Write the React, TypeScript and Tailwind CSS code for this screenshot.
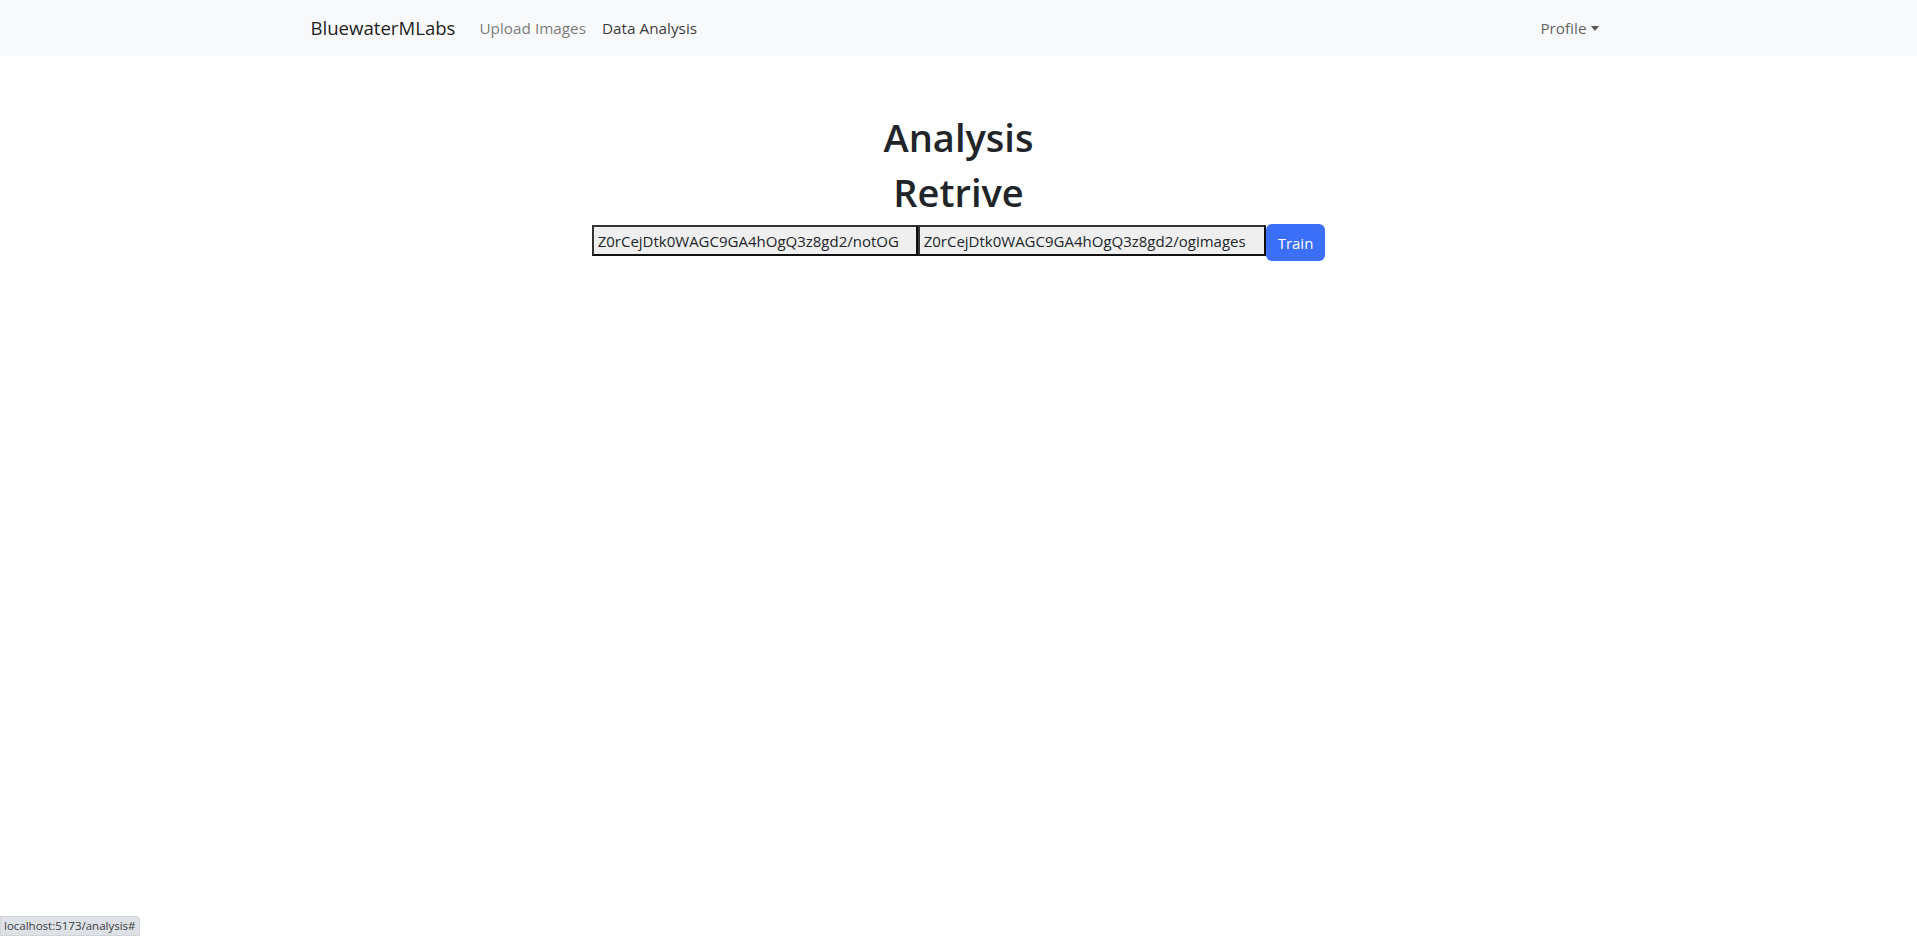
export default function App() {
  return (
    <div className="min-h-[936px] bg-white font-['Open_Sans',sans-serif] text-[#212529]">
      <nav className="h-[56px] bg-[#f8f9fa]">
        <div className="mx-auto flex h-full w-[1320px] items-center px-3">
          <a href="#" className="mr-4 py-[5px] text-[18.6px] leading-[30px] text-black/90">
            BluewaterMLabs
          </a>
          <a href="#" className="px-2 py-2 text-[15.3px] leading-6 text-black/55">
            Upload Images
          </a>
          <a href="#" className="px-2 py-2 text-[15.3px] leading-6 text-black/80">
            Data Analysis
          </a>
          <a href="#" className="ml-auto flex items-center px-2 py-2 text-[15.3px] leading-6 text-black/65">
            Profile
            <span className="ml-[4px] inline-block border-x-[4px] border-t-[5px] border-x-transparent border-t-black/65" />
          </a>
        </div>
      </nav>

      <main className="mt-[57px] text-center">
        <h1 className="mb-[7px] text-[38px] font-semibold leading-[48px]">Analysis</h1>
        <h1 className="mb-[9px] text-[38px] font-semibold leading-[48px]">Retrive</h1>
        <div className="flex items-start justify-center">
          <input
            readOnly
            value="Z0rCejDtk0WAGC9GA4hOgQ3z8gd2/notOG"
            className="h-[31px] w-[326px] border-2 border-t-[#333] border-l-[#333] border-r-[#111] border-b-[#111] bg-[#efefef] px-[4px] text-[15px] leading-6 outline-none"
          />
          <input
            readOnly
            value="Z0rCejDtk0WAGC9GA4hOgQ3z8gd2/ogimages"
            className="h-[31px] w-[348px] border-2 border-t-[#333] border-l-[#333] border-r-[#111] border-b-[#111] bg-[#efefef] px-[4px] text-[15px] leading-6 outline-none"
          />
          <button className="-mt-px h-[37px] rounded-[6px] bg-[#3b6ff8] px-3 text-[15px] leading-6 text-white">
            Train
          </button>
        </div>
      </main>

      <div className="fixed bottom-0 left-0 rounded-tr-[4px] border border-[#d0d3d8] bg-[#dee1e6] px-[3px] py-[1px] text-[11.5px] leading-[16px] text-[#3c4043]">
        localhost:5173/analysis#
      </div>
    </div>
  );
}
